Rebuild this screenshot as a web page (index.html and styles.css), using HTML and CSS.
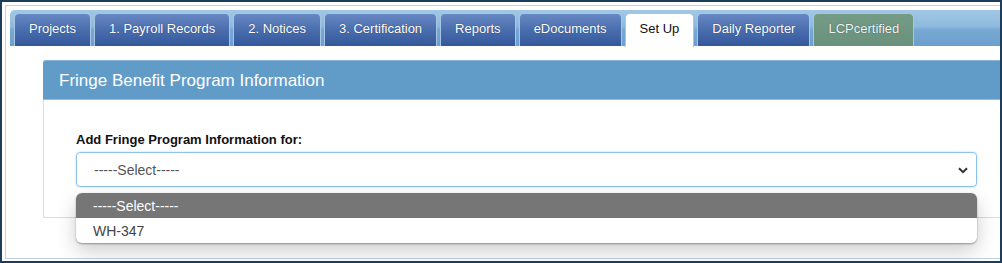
FILE: index.html
```html
<!DOCTYPE html>
<html lang="en">
<head>
  <meta charset="UTF-8">
  <title>Set Up - Fringe Benefit Program Information</title>
  <link rel="stylesheet" href="styles.css">
</head>
<body>

  <div class="frame">
    <div class="tabs">
      <ul class="tab-nav">
        <li class="tab">Projects</li>
        <li class="tab">1. Payroll Records</li>
        <li class="tab">2. Notices</li>
        <li class="tab">3. Certification</li>
        <li class="tab">Reports</li>
        <li class="tab">eDocuments</li>
        <li class="tab active">Set Up</li>
        <li class="tab">Daily Reporter</li>
        <li class="tab green">LCPcertified</li>
      </ul>

      <div class="tab-content">
        <div class="panel">
          <div class="panel-heading">Fringe Benefit Program Information</div>
          <div class="panel-body">
            <label class="field-label">Add Fringe Program Information for:</label>
            <div class="select-wrap">
              <div class="select">
                <span>-----Select-----</span>
                <svg class="chevron" width="10" height="7" viewBox="0 0 10 7">
                  <path d="M1 1.2 L5 5.2 L9 1.2" fill="none" stroke="#333" stroke-width="2"/>
                </svg>
              </div>
              <ul class="dropdown">
                <li class="option selected">-----Select-----</li>
                <li class="option">WH-347</li>
              </ul>
            </div>
          </div>
        </div>
      </div>
    </div>
  </div>

</body>
</html>
```

FILE: styles.css
```css
* {
  margin: 0;
  padding: 0;
  box-sizing: border-box;
}

body {
  font-family: 'Liberation Sans', Arial, sans-serif;
  background: #fff;
}

.frame {
  width: 1002px;
  height: 263px;
  border: 2px solid #1d3d5b;
  padding: 3px 0 0 3px;
  overflow: hidden;
  background: #fff;
}

.tabs {
  width: 1000px;
  height: 254px;
  border: 1px solid #bcd3e6;
  border-right: none;
  padding: 4px 0 0 4px;
}

/* tab strip */
.tab-nav {
  list-style: none;
  display: flex;
  gap: 3px;
  height: 36px;
  padding: 3px 4px 0;
  border-radius: 5px 0 0 0;
  background: linear-gradient(to bottom, #a2c7e5 0%, #8ebade 45%, #76a8d3 55%, #6c9fce 100%);
}

.tab {
  height: 33px;
  line-height: 30px;
  padding: 0 14px;
  font-size: 13px;
  color: #fff;
  text-shadow: 0 0 1px rgba(20, 40, 80, 0.7);
  border: 1px solid #a6c6e4;
  border-bottom: none;
  border-radius: 5px 5px 0 0;
  background: linear-gradient(to bottom, #6788c3 0%, #4a6dad 50%, #33589a 100%);
  white-space: nowrap;
}

.tab.active {
  height: 34px;
  background: #fff;
  color: #111;
  text-shadow: none;
}

.tab.green {
  background: linear-gradient(to bottom, #739b85 0%, #6a917b 100%);
  color: #f2f6f2;
}

/* content */
.tab-content {
  padding: 14px 0 0 33px;
}

.panel {
  width: 1000px;
  border: 1px solid #c8e2ef;
  border-radius: 4px 0 0 0;
}

.panel-heading {
  height: 40px;
  line-height: 39px;
  padding-left: 16px;
  font-size: 17px;
  color: #fff;
  background: #619cc9;
  border-top: 1px solid #86b6dc;
  border-bottom: 1px solid #8fc0e0;
  border-radius: 3px 0 0 0;
  margin: -1px 0 0 -1px;
}

.panel-body {
  padding: 32px 0 30px 32px;
}

.field-label {
  display: block;
  font-size: 13px;
  line-height: 16px;
  font-weight: bold;
  color: #111;
  margin-bottom: 4px;
}

.select-wrap {
  position: relative;
  width: 901px;
}

.select {
  height: 35px;
  display: flex;
  align-items: center;
  justify-content: space-between;
  padding: 0 8px 0 17px;
  font-size: 14px;
  color: #555;
  border: 1px solid #8cc3ec;
  border-radius: 4px;
  box-shadow: 0 0 2px rgba(100, 170, 230, 0.5);
}

.chevron {
  margin-top: 1px;
}

/* open option list */
.dropdown {
  position: absolute;
  top: 41px;
  left: 0;
  width: 901px;
  list-style: none;
  background: #fff;
  border-radius: 6px;
  overflow: hidden;
  box-shadow: 0 1px 2px rgba(0, 0, 0, 0.35), 0 8px 20px rgba(0, 0, 0, 0.2);
}

.option {
  height: 25px;
  line-height: 26px;
  padding-left: 17px;
  font-size: 14px;
  color: #444;
}

.option.selected {
  background: #767676;
  color: #fff;
}
```
